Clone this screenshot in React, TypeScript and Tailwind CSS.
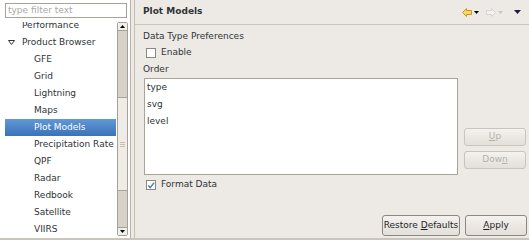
import React from 'react';

const treeItems: { label: string; level: number; selected?: boolean; expander?: boolean }[] = [
  { label: 'Performance', level: 0 },
  { label: 'Product Browser', level: 0, expander: true },
  { label: 'GFE', level: 1 },
  { label: 'Grid', level: 1 },
  { label: 'Lightning', level: 1 },
  { label: 'Maps', level: 1 },
  { label: 'Plot Models', level: 1, selected: true },
  { label: 'Precipitation Rate', level: 1 },
  { label: 'QPF', level: 1 },
  { label: 'Radar', level: 1 },
  { label: 'Redbook', level: 1 },
  { label: 'Satellite', level: 1 },
  { label: 'VIIRS', level: 1 },
];

const orderItems = ['type', 'svg', 'level'];

const Checkbox: React.FC<{ checked?: boolean }> = ({ checked }) => (
  <div className="w-[10px] h-[10px] border border-[#8a8780] bg-white flex items-center justify-center">
    {checked && (
      <svg width="9" height="9" viewBox="0 0 9 9">
        <path d="M1.5 4.5 L3.6 7 L8 1.2" fill="none" stroke="#3f78c4" strokeWidth="1.6" />
      </svg>
    )}
  </div>
);

const Scrollbar: React.FC = () => (
  <div className="w-[11px] flex flex-col border border-[#a6a198] rounded-[2px] bg-[#d6d1c9]">
    <div className="h-[8px] bg-[#f1efeb] border-b border-[#a6a198] flex items-center justify-center">
      <svg width="5" height="3" viewBox="0 0 5 3"><path d="M0 3 L2.5 0 L5 3 Z" fill="#000" /></svg>
    </div>
    <div className="flex-1 flex flex-col">
      <div className="h-[66px]" />
      <div className="h-[94px] bg-[#efece8] border-y border-[#aaa59c] flex items-center justify-center">
        <div className="flex flex-col gap-[1px]">
          <div className="w-[5px] h-px bg-[#c4bfb6]" />
          <div className="w-[5px] h-px bg-[#c4bfb6]" />
          <div className="w-[5px] h-px bg-[#c4bfb6]" />
        </div>
      </div>
      <div className="flex-1" />
    </div>
    <div className="h-[8px] bg-[#f1efeb] border-t border-[#a6a198] flex items-center justify-center">
      <svg width="5" height="3" viewBox="0 0 5 3"><path d="M0 0 L2.5 3 L5 0 Z" fill="#000" /></svg>
    </div>
  </div>
);

const Button: React.FC<{ children: React.ReactNode; disabled?: boolean; className?: string }> = ({ children, disabled, className }) => (
  <div
    className={`flex items-center justify-center rounded-[3px] border bg-gradient-to-b from-[#f4f2ef] to-[#e3dfd9] ${
      disabled ? 'border-[#c9c4bc] text-[#b5b1aa]' : 'border-[#8d887f] text-[#1f1f1f]'
    } ${className ?? ''}`}
  >
    <span className="whitespace-pre">{children}</span>
  </div>
);

export default function App() {
  return (
    <div
      className="w-[529px] h-[240px] flex bg-[#edeae6] text-[9px] text-[#2e3436] overflow-hidden border-b-2 border-[#c9c5be]"
      style={{ fontFamily: '"DejaVu Sans", sans-serif' }}
    >
      {/* left: filter + tree */}
      <div className="w-[131px] bg-white flex flex-col pt-[3px] pl-[5px] pr-[2px] border-r border-[#b6b1a9]">
        <div className="h-[15px] border border-[#a7a29a] flex items-center px-[2px] text-[#a9a9a9] mr-[1px]">
          type filter text
        </div>
        <div className="flex-1 flex mt-[4px] min-h-0">
          <div className="flex-1 overflow-hidden">
            <div className="-mt-[5px]">
              {treeItems.map((item) => (
                <div
                  key={item.label}
                  className={`h-[17px] flex items-center whitespace-nowrap ${
                    item.selected ? 'bg-gradient-to-b from-[#6198d6] to-[#3b72b8] text-white' : ''
                  }`}
                  style={{ paddingLeft: item.level === 1 ? 29 : 17 }}
                >
                  {item.expander && (
                    <svg width="7" height="5" viewBox="0 0 7 5" className="-ml-[14px] mr-[7px]">
                      <path d="M0.5 0.5 L6.5 0.5 L3.5 4.5 Z" fill="none" stroke="#2e3436" strokeWidth="1" />
                    </svg>
                  )}
                  {item.label}
                </div>
              ))}
            </div>
          </div>
          <div className="flex pb-[2px] pl-px">
            <Scrollbar />
          </div>
        </div>
      </div>

      {/* right: preference page */}
      <div className="flex-1 flex flex-col ml-[3px] border-l border-[#c3beb6]">
        <div className="h-[25px] flex items-center justify-between pl-[8px] pr-[8px] border-b border-[#c9c5be]">
          <span className="font-bold">Plot Models</span>
          <div className="flex items-center">
            <svg width="10" height="9" viewBox="0 0 10 9">
              <path d="M0.5 4.5 L4.5 0.5 L4.5 2.5 L9.5 2.5 L9.5 6.5 L4.5 6.5 L4.5 8.5 Z" fill="#f7d56b" stroke="#c79a1e" strokeWidth="1" />
            </svg>
            <svg width="5" height="3" viewBox="0 0 5 3" className="ml-[2px]"><path d="M0 0 L2.5 3 L5 0 Z" fill="#000" /></svg>
            <svg width="10" height="9" viewBox="0 0 10 9" className="ml-[7px]">
              <path d="M9.5 4.5 L5.5 0.5 L5.5 2.5 L0.5 2.5 L0.5 6.5 L5.5 6.5 L5.5 8.5 Z" fill="#f3f2f0" stroke="#d6d4d0" strokeWidth="1" />
            </svg>
            <svg width="5" height="3" viewBox="0 0 5 3" className="ml-[2px]"><path d="M0 0 L2.5 3 L5 0 Z" fill="#c8c6c2" /></svg>
            <svg width="7" height="4" viewBox="0 0 7 4" className="ml-[11px]"><path d="M0 0 L3.5 4 L7 0 Z" fill="#1c1c3c" /></svg>
          </div>
        </div>

        <div className="flex-1 flex flex-col pl-[8px] pr-[2px] pt-[6px] pb-[2px]">
          <div className="h-[12px] flex items-center">Data Type Preferences</div>
          <div className="flex items-center gap-[5px] mt-[4px] pl-[3px] h-[12px]">
            <Checkbox />
            <span>Enable</span>
          </div>
          <div className="h-[12px] flex items-center mt-[5px]">Order</div>
          <div className="flex mt-[2px] gap-[6px]">
            <div className="w-[314px] h-[97px] ml-[1px] bg-white border border-[#a8a39b] pl-[2px]">
              {orderItems.map((o) => (
                <div key={o} className="h-[17px] flex items-center">
                  {o}
                </div>
              ))}
            </div>
            <div className="flex flex-col gap-[5px] pt-[50px]">
              <Button disabled className="w-[62px] h-[18px]">
                <span className="underline">U</span>p
              </Button>
              <Button disabled className="w-[62px] h-[18px]">
                Dow<span className="underline">n</span>
              </Button>
            </div>
          </div>
          <div className="flex items-center gap-[5px] mt-[4px] pl-[3px] h-[12px]">
            <Checkbox checked />
            <span>Format Data</span>
          </div>
          <div className="flex-1" />
          <div className="flex justify-end gap-[5px]">
            <Button className="w-[78px] h-[21px]">
              Restore <span className="underline">D</span>efaults
            </Button>
            <Button className="w-[62px] h-[21px]">
              <span className="underline">A</span>pply
            </Button>
          </div>
        </div>
      </div>
    </div>
  );
}
